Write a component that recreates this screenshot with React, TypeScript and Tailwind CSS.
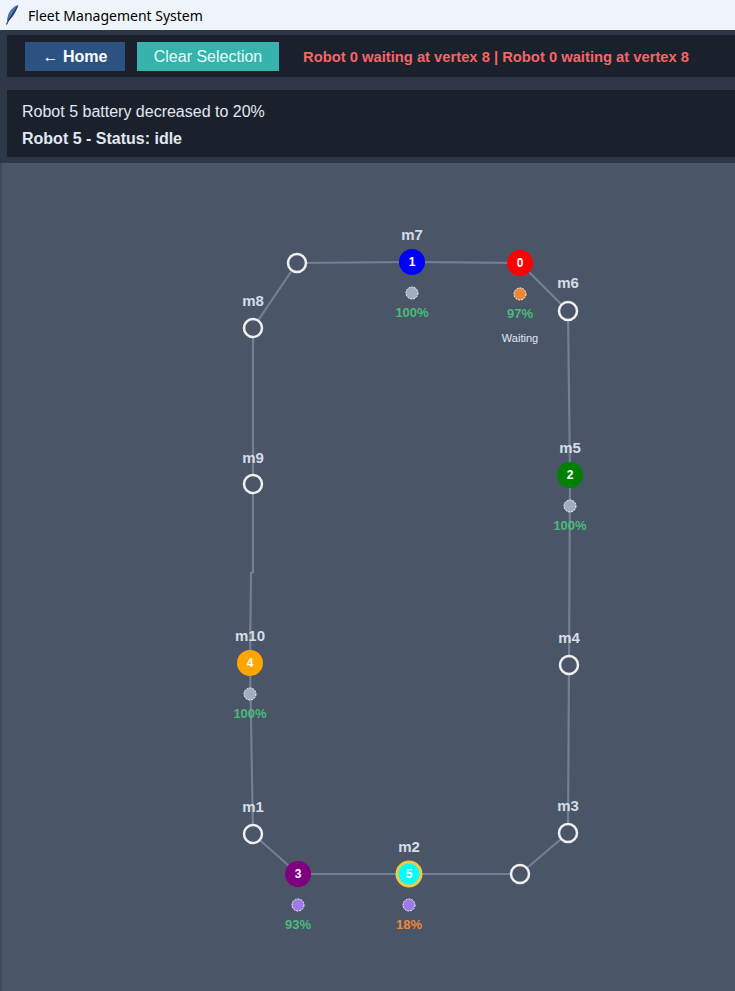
import React from 'react';

type Pt = { x: number; y: number };

const path: Pt[] = [
  { x: 297, y: 263 },
  { x: 412, y: 262 },
  { x: 520, y: 263 },
  { x: 568, y: 311 },
  { x: 570, y: 475 },
  { x: 569, y: 665 },
  { x: 568, y: 833 },
  { x: 520, y: 874 },
  { x: 409, y: 874 },
  { x: 298, y: 874 },
  { x: 253, y: 834 },
  { x: 250, y: 663 },
  { x: 251, y: 573 },
  { x: 253, y: 572 },
  { x: 253, y: 484 },
  { x: 253, y: 328 },
  { x: 297, y: 263 },
];

const emptyNodes: Pt[] = [
  { x: 297, y: 263 },
  { x: 568, y: 311 },
  { x: 253, y: 328 },
  { x: 253, y: 484 },
  { x: 569, y: 665 },
  { x: 568, y: 833 },
  { x: 253, y: 834 },
  { x: 520, y: 874 },
];

const labels = [
  { t: 'm7', x: 412, y: 234 },
  { t: 'm8', x: 253, y: 300 },
  { t: 'm6', x: 568, y: 282 },
  { t: 'm9', x: 253, y: 457 },
  { t: 'm5', x: 570, y: 447 },
  { t: 'm10', x: 250, y: 635 },
  { t: 'm4', x: 569, y: 637 },
  { t: 'm1', x: 253, y: 806 },
  { t: 'm3', x: 568, y: 805 },
  { t: 'm2', x: 409, y: 846 },
];

const robots = [
  { id: 1, x: 412, y: 262, fill: '#0000ff', dot: '#a0aec0', pct: '100%', pctColor: '#48bb78' },
  { id: 0, x: 520, y: 263, fill: '#ff0000', dot: '#ed8936', pct: '97%', pctColor: '#48bb78', note: 'Waiting' },
  { id: 2, x: 570, y: 475, fill: '#008000', dot: '#a0aec0', pct: '100%', pctColor: '#48bb78' },
  { id: 4, x: 250, y: 663, fill: '#ffa500', dot: '#a0aec0', pct: '100%', pctColor: '#48bb78' },
  { id: 3, x: 298, y: 874, fill: '#800080', dot: '#9f7aea', pct: '93%', pctColor: '#48bb78' },
  { id: 5, x: 409, y: 874, fill: '#00ffff', dot: '#9f7aea', pct: '18%', pctColor: '#ed8936', selected: true },
];

function Feather() {
  return (
    <svg width="14" height="20" viewBox="0 0 14 20" className="shrink-0">
      <path d="M12.8 0.6 C8 2.2 4.2 6.5 3 12.5 L2.6 15.8 C6.2 13.5 9.8 8.8 12.8 0.6 Z" fill="#4f7fc4" stroke="#23416e" strokeWidth="0.8" />
      <path d="M11.8 2.2 L3 16.5 L1.4 19.6" fill="none" stroke="#1c2b44" strokeWidth="1.1" />
    </svg>
  );
}

function MapCanvas() {
  const pts = path.map(p => `${p.x},${p.y}`).join(' ');
  const font = "'Liberation Sans', Arial, sans-serif";
  return (
    <svg width="735" height="828" viewBox="0 163 735 828" className="block">
      <polyline points={pts} fill="none" stroke="#718096" strokeWidth="2.2" />
      {emptyNodes.map((n, i) => (
        <circle key={i} cx={n.x} cy={n.y} r="9" fill="#4a5568" stroke="#f0f0f0" strokeWidth="2.5" />
      ))}
      {labels.map(l => (
        <text key={l.t} x={l.x} y={l.y} textAnchor="middle" dominantBaseline="central" fill="#d5dde6" fontSize="15" fontWeight="bold" fontFamily={font}>
          {l.t}
        </text>
      ))}
      {robots.map(r => (
        <g key={r.id}>
          <circle cx={r.x} cy={r.y} r={r.selected ? 12 : 13} fill={r.fill} stroke={r.selected ? '#ecc94b' : 'none'} strokeWidth={r.selected ? 3 : 0} />
          <text x={r.x} y={r.y} textAnchor="middle" dominantBaseline="central" fill="#ffffff" fontSize="12" fontWeight="bold" fontFamily={font}>
            {r.id}
          </text>
          <circle cx={r.x} cy={r.y + 31} r="6" fill={r.dot} stroke="#ffffff" strokeWidth="1" strokeDasharray="2 1" />
          <text x={r.x} y={r.y + 50} textAnchor="middle" dominantBaseline="central" fill={r.pctColor} fontSize="13" fontWeight="bold" fontFamily={font}>
            {r.pct}
          </text>
          {r.note && (
            <text x={r.x} y={r.y + 75} textAnchor="middle" dominantBaseline="central" fill="#e2e8f0" fontSize="11" fontFamily={font}>
              {r.note}
            </text>
          )}
        </g>
      ))}
    </svg>
  );
}

export default function App() {
  return (
    <div className="w-[735px] h-[991px] flex flex-col overflow-hidden font-['Liberation_Sans',Arial,sans-serif]">
      <div className="h-[30px] shrink-0 bg-[#eef4f9] flex items-center gap-[9px] pl-[5px]">
        <Feather />
        <span className="text-[14px] text-black font-['Noto_Sans',sans-serif]">Fleet Management System</span>
      </div>

      <div className="shrink-0 bg-[#2d3748] pt-[5px] pb-[6px] pl-[7px] flex flex-col gap-[13px]">
        <div className="h-[42px] bg-[#1a202c] flex items-center pl-[18px]">
          <button className="w-[100px] h-[29px] pt-[2px] bg-[#2c5282] text-white font-bold text-[16px] flex items-center justify-center">
            ← Home
          </button>
          <button className="ml-[12px] w-[142px] h-[29px] pt-[2px] bg-[#38b2ac] text-[#e6fffa] text-[16px] flex items-center justify-center">
            Clear Selection
          </button>
          <span className="ml-[24px] pt-[2px] text-[#f56565] font-bold text-[14.75px]">
            Robot 0 waiting at vertex 8 | Robot 0 waiting at vertex 8
          </span>
        </div>
        <div className="h-[67px] bg-[#1a202c] pl-[15px] pt-[12px] flex flex-col gap-[7px] text-[#e2e8f0] text-[16px] leading-[20px]">
          <div>Robot 5 battery decreased to 20%</div>
          <div className="font-bold">Robot 5 - Status: idle</div>
        </div>
      </div>

      <div className="flex-1 bg-[#4a5568] border-l-2 border-[#414a5a]">
        <div className="-ml-[2px]">
          <MapCanvas />
        </div>
      </div>
    </div>
  );
}
